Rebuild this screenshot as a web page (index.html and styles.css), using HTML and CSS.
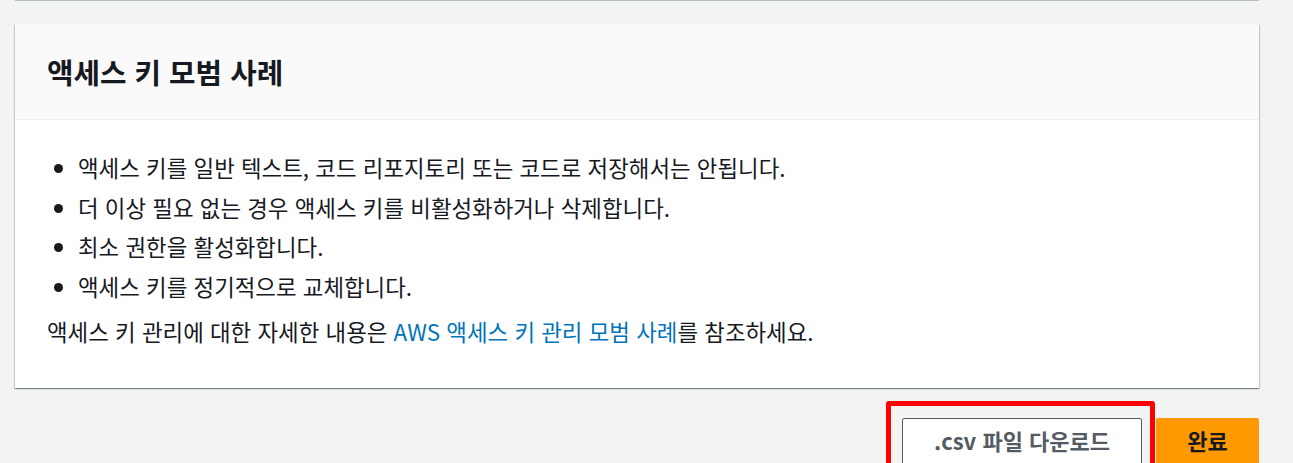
FILE: index.html
```html
<!DOCTYPE html>
<html lang="ko">
<head>
<meta charset="utf-8">
<link rel="stylesheet" href="styles.css">
</head>
<body>
<div class="page">
  <div class="prev-card"></div>
  <section class="card">
    <header class="card-header">
      <h2 class="card-title">액세스 키 모범 사례</h2>
    </header>
    <div class="card-body">
      <ul class="tips">
        <li>액세스 키를 일반 텍스트, 코드 리포지토리 또는 코드로 저장해서는 안됩니다.</li>
        <li>더 이상 필요 없는 경우 액세스 키를 비활성화하거나 삭제합니다.</li>
        <li>최소 권한을 활성화합니다.</li>
        <li>액세스 키를 정기적으로 교체합니다.</li>
      </ul>
      <p class="note">액세스 키 관리에 대한 자세한 내용은 <a class="link" href="#">AWS 액세스 키 관리 모범 사례</a>를 참조하세요.</p>
    </div>
  </section>
  <div class="actions">
    <div class="highlight-wrap">
      <button class="btn btn-normal"><span class="btn-label">.csv 파일 다운로드</span></button>
      <span class="highlight"></span>
    </div>
    <button class="btn btn-primary"><span class="btn-label">완료</span></button>
  </div>
</div>
</body>
</html>
```

FILE: styles.css
```css
* { box-sizing: border-box; }
html, body {
  margin: 0;
  padding: 0;
  background: #f2f3f3;
  height: 100%;
  overflow: hidden;
}
body {
  font-family: "Noto Sans CJK KR", "Noto Sans", "Liberation Sans", sans-serif;
  color: #16191f;
}
.page {
  padding: 0 34px 0 15px;
}
.prev-card {
  height: 1px;
  background: #b7bcbc;
}
.card {
  margin-top: 23px;
  background: #fff;
  box-shadow: 0 1px 1px 0 rgba(0, 28, 36, 0.3), 1px 1px 1px 0 rgba(0, 28, 36, 0.15), -1px 1px 1px 0 rgba(0, 28, 36, 0.15);
}
.card-header {
  height: 96px;
  background: #fafafa;
  border-bottom: 1px solid #eaeded;
  padding-left: 32px;
  display: flex;
  align-items: center;
}
.card-title {
  margin: 0;
  font-size: 28.8px;
  font-weight: 700;
  line-height: 36px;
  color: #16191f;
}
.card-body {
  padding: 33px 32px 43px 32px;
  font-size: 22.4px;
  line-height: 28px;
  color: #16191f;
}
.tips {
  margin: 0;
  padding-left: 31px;
}
.tips li {
  margin-bottom: 11.5px;
}
.note {
  margin: 0;
  padding-top: 6px;
}
.link {
  color: #0073bb;
  text-decoration: none;
}
.actions {
  display: flex;
  justify-content: flex-end;
  gap: 14px;
  margin-top: 30px;
}
.highlight-wrap {
  position: relative;
}
.btn {
  font-family: inherit;
  font-size: 22px;
  font-weight: 700;
  line-height: 28px;
  height: 60px;
  padding: 7px 10px 0;
  border-radius: 2px;
  cursor: pointer;
  display: flex;
  align-items: flex-start;
  justify-content: center;
}
.btn-label {
  display: block;
}
.btn-normal {
  width: 240px;
  background: #fff;
  border: 1px solid #545b64;
  color: #545b64;
}
.btn-primary {
  width: 103px;
  background: #ff9900;
  border: 1px solid #ff9900;
  color: #16191f;
}
.highlight {
  position: absolute;
  left: -16px;
  top: -17px;
  right: -13px;
  bottom: -30px;
  border: 5px solid #ff0000;
  border-radius: 3px;
  pointer-events: none;
}
```
